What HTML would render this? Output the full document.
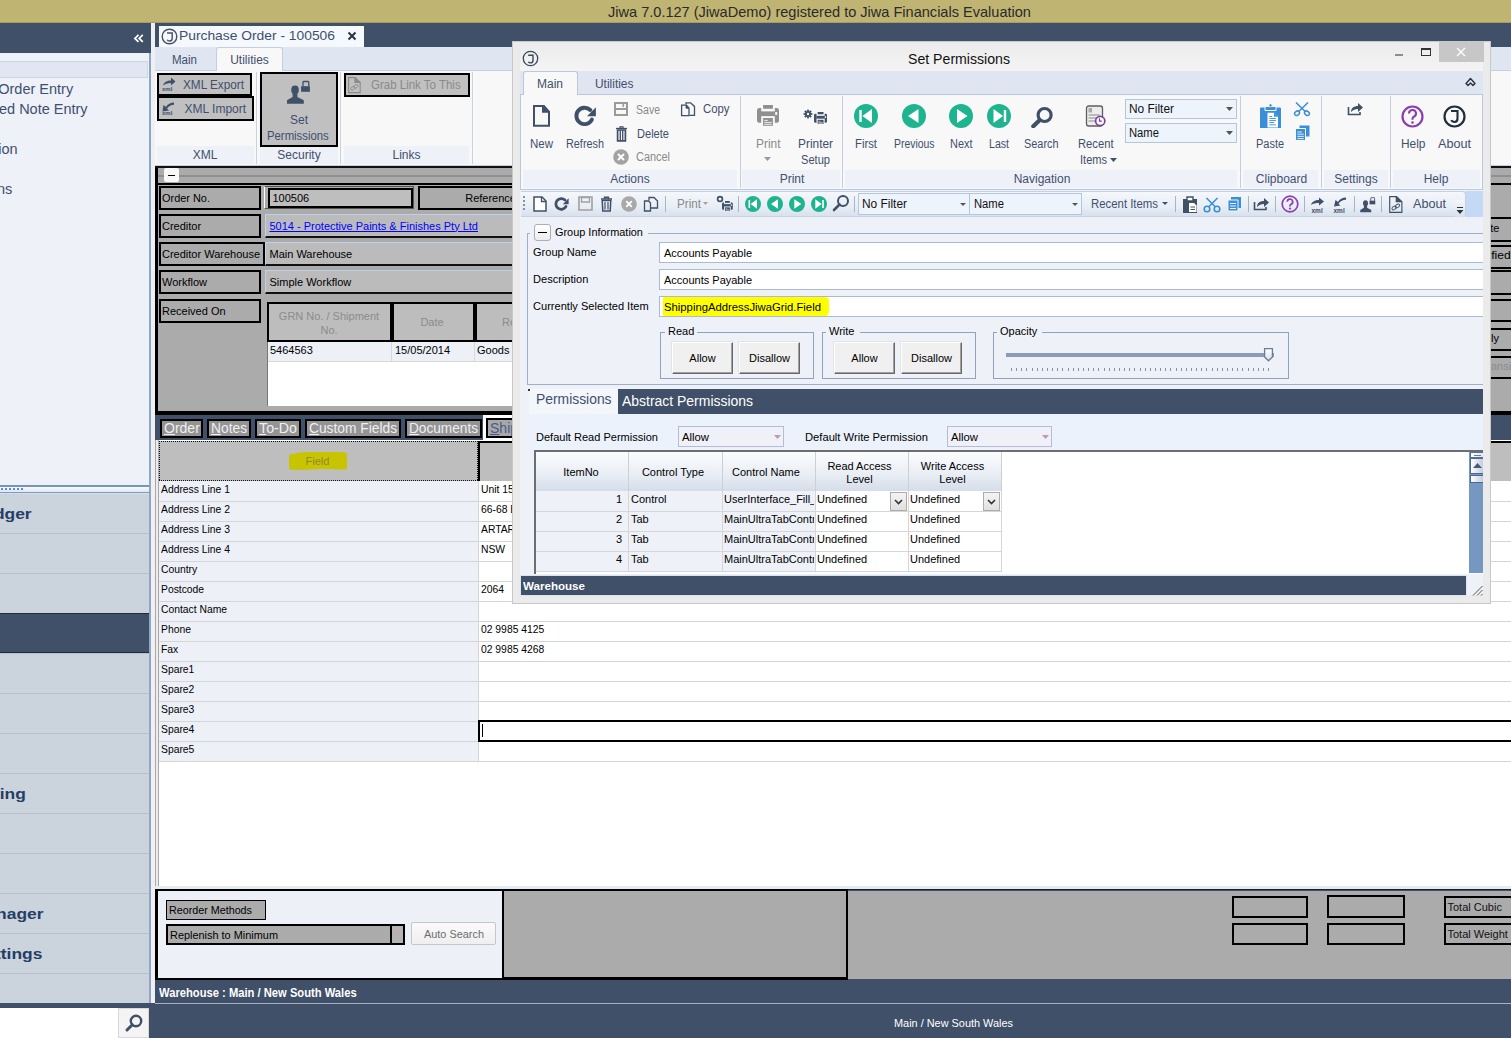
<!DOCTYPE html><html><head><meta charset="utf-8"><style>
html,body{margin:0;padding:0;width:1511px;height:1038px;overflow:hidden;background:#3F5068}
.a{position:absolute}
.t{white-space:nowrap;line-height:1;font-family:"Liberation Sans",sans-serif}
svg text{font-family:"Liberation Sans",sans-serif}
</style></head><body>
<div class="a" style="left:0px;top:0px;width:1511px;height:23px;background:#C0B472"></div>
<div class="a" style="left:0px;top:22px;width:1511px;height:1px;background:#A99C62"></div>
<div class="a t" style="left:608.00px;top:4.30px;font-size:15px;color:#2a2a2a;transform:scaleX(0.9700);transform-origin:0 0;">Jiwa 7.0.127 (JiwaDemo) registered to Jiwa Financials Evaluation</div>
<div class="a" style="left:0px;top:23px;width:1511px;height:1015px;background:#3F5068"></div>
<div class="a" style="left:0px;top:53px;width:150px;height:432px;background:#EEF1F8"></div>
<div class="a" style="left:0px;top:61px;width:148px;height:17px;background:#E1E7F2;border-top:1px solid #CDD5DF;border-bottom:1px solid #CDD5DF;border-right:1px solid #CDD5DF;box-sizing:border-box"></div>
<div class="a t" style="left:-67.08px;top:81.65px;font-size:14px;color:#3F4F6E;transform:scaleX(1.0350);transform-origin:0 0;">Purchase Order Entry</div>
<div class="a t" style="left:-92.06px;top:101.65px;font-size:14px;color:#3F4F6E;transform:scaleX(1.0350);transform-origin:0 0;">Goods Received Note Entry</div>
<div class="a t" style="left:-169.59px;top:141.65px;font-size:14px;color:#3F4F6E;transform:scaleX(1.0350);transform-origin:0 0;">Stock Transfer Reconciliation</div>
<div class="a t" style="left:-144.19px;top:181.65px;font-size:14px;color:#3F4F6E;transform:scaleX(1.0350);transform-origin:0 0;">Purchase Order Options</div>
<div class="a" style="left:0px;top:484.7px;width:150px;height:2.3000000000000114px;background:#7794BA"></div>
<div class="a" style="left:0px;top:487px;width:150px;height:5px;background:linear-gradient(#FAFCFE,#DCE6F3)"></div>
<div class="a" style="left:0px;top:492px;width:150px;height:1px;background:#7F9AC0"></div>
<div class="a" style="left:0px;top:493px;width:150px;height:1px;background:#D9DEE5"></div>
<div class="a" style="left:0px;top:494px;width:150px;height:509px;background:#CBD3DD"></div>
<div class="a" style="left:0px;top:533px;width:150px;height:1px;background:#B8C1CD"></div>
<div class="a" style="left:0px;top:573px;width:150px;height:1px;background:#B8C1CD"></div>
<div class="a" style="left:0px;top:613px;width:150px;height:1px;background:#B8C1CD"></div>
<div class="a" style="left:0px;top:653px;width:150px;height:1px;background:#B8C1CD"></div>
<div class="a" style="left:0px;top:693px;width:150px;height:1px;background:#B8C1CD"></div>
<div class="a" style="left:0px;top:733px;width:150px;height:1px;background:#B8C1CD"></div>
<div class="a" style="left:0px;top:773px;width:150px;height:1px;background:#B8C1CD"></div>
<div class="a" style="left:0px;top:813px;width:150px;height:1px;background:#B8C1CD"></div>
<div class="a" style="left:0px;top:853px;width:150px;height:1px;background:#B8C1CD"></div>
<div class="a" style="left:0px;top:893px;width:150px;height:1px;background:#B8C1CD"></div>
<div class="a" style="left:0px;top:933px;width:150px;height:1px;background:#B8C1CD"></div>
<div class="a" style="left:0px;top:973px;width:150px;height:1px;background:#B8C1CD"></div>
<div class="a" style="left:0px;top:613px;width:150px;height:40px;background:#3F5068;border-top:1px solid #1f2a3a;border-bottom:1px solid #1f2a3a;box-sizing:border-box"></div>
<div class="a t" style="left:-96.15px;top:505.80px;font-size:15px;color:#243E66;font-weight:bold;transform:scaleX(1.1600);transform-origin:0 0;">General Ledger</div>
<div class="a t" style="left:-69.24px;top:785.60px;font-size:15px;color:#243E66;font-weight:bold;transform:scaleX(1.1600);transform-origin:0 0;">Purchasing</div>
<div class="a t" style="left:-89.46px;top:905.80px;font-size:15px;color:#243E66;font-weight:bold;transform:scaleX(1.1600);transform-origin:0 0;">Report Manager</div>
<div class="a t" style="left:-93.39px;top:945.80px;font-size:15px;color:#243E66;font-weight:bold;transform:scaleX(1.1600);transform-origin:0 0;">System Settings</div>
<div class="a" style="left:149px;top:53px;width:2px;height:950px;background:#8FA5C2"></div>
<div class="a" style="left:0px;top:1008px;width:118px;height:30px;background:#fff"></div>
<div class="a" style="left:118px;top:1008px;width:31px;height:30px;background:#F4F4F4;border:1px solid #D8D8D8;box-sizing:border-box"></div>
<svg class="a" style="left:123px;top:1012px" width="22" height="22" viewBox="0 0 22 22"><circle cx="13" cy="9" r="5.2" fill="none" stroke="#3F5068" stroke-width="2.4"/><path d="M9.3 12.7L4 18" stroke="#3F5068" stroke-width="3" stroke-linecap="round"/></svg>
<div class="a" style="left:1px;top:488px;width:2px;height:2px;background:#4A86C8;border-radius:1px 0 0 0"></div><div class="a" style="left:5px;top:488px;width:2px;height:2px;background:#4A86C8;border-radius:1px 0 0 0"></div><div class="a" style="left:9px;top:488px;width:2px;height:2px;background:#4A86C8;border-radius:1px 0 0 0"></div><div class="a" style="left:13px;top:488px;width:2px;height:2px;background:#4A86C8;border-radius:1px 0 0 0"></div><div class="a" style="left:17px;top:488px;width:2px;height:2px;background:#4A86C8;border-radius:1px 0 0 0"></div><div class="a" style="left:21px;top:488px;width:2px;height:2px;background:#4A86C8;border-radius:1px 0 0 0"></div>
<svg class="a" style="left:130px;top:30px" width="16" height="16" viewBox="0 0 16 16"><path d="M8.5 4.9L4.9 8.4L8.5 11.9M12.8 4.9L9.2 8.4L12.8 11.9" fill="none" stroke="#fff" stroke-width="1.7"/></svg>
<div class="a" style="left:151px;top:23px;width:4px;height:980px;background:#EEF0F3"></div>
<div class="a" style="left:159px;top:26px;width:205px;height:21px;background:#F5F8FC"></div>
<svg class="a" style="left:161px;top:28px" width="17" height="17" viewBox="0 0 17 17"><circle cx="8.5" cy="8.5" r="7.3" fill="none" stroke="#3F5068" stroke-width="1.4"/><path d="M6 5h5.2v5.2c0 2-1 2.8-2.6 2.8c-1.2 0-2-.5-2.4-1.3" fill="none" stroke="#3F5068" stroke-width="1.4"/></svg>
<div class="a t" style="left:179.00px;top:29.00px;font-size:13px;color:#3F4F6E;transform:scaleX(1.0631);transform-origin:0 0;">Purchase Order - 100506</div>
<svg class="a" style="left:347px;top:31px" width="10" height="10" viewBox="0 0 10 10"><path d="M1.5 1.5L8.5 8.5M8.5 1.5L1.5 8.5" stroke="#2B3340" stroke-width="2"/></svg>
<div class="a" style="left:155px;top:47px;width:1356px;height:23px;background:#DFE5F1"></div>
<div class="a t" style="left:172.00px;top:53.84px;font-size:12px;color:#3F4F6E;transform:scaleX(0.9610);transform-origin:0 0;">Main</div>
<div class="a" style="left:155px;top:70px;width:1356px;height:96px;background:#F8F8F8;border-top:1px solid #C3CFE0;border-bottom:1px solid #C3CFE0;box-sizing:border-box"></div>
<div class="a" style="left:216px;top:47px;width:67px;height:24px;background:#F8F8F8;border:1px solid #C3CFE0;border-bottom:none;border-radius:3px 3px 0 0;box-sizing:border-box"></div>
<div class="a t" style="left:230.16px;top:53.84px;font-size:12px;color:#3F4F6E;">Utilities</div>
<div class="a" style="left:157px;top:146px;width:97px;height:18px;background:#EEF1F8"></div>
<div class="a" style="left:260px;top:146px;width:78px;height:18px;background:#EEF1F8"></div>
<div class="a" style="left:344px;top:146px;width:125px;height:18px;background:#EEF1F8"></div>
<div class="a" style="left:256px;top:72px;width:1px;height:92px;background:#C9D4E3"></div>
<div class="a" style="left:340px;top:72px;width:1px;height:92px;background:#C9D4E3"></div>
<div class="a" style="left:472px;top:72px;width:1px;height:92px;background:#C9D4E3"></div>
<div class="a t" style="left:192.66px;top:148.84px;font-size:12px;color:#3F4F6E;">XML</div>
<div class="a t" style="left:277.33px;top:148.84px;font-size:12px;color:#3F4F6E;">Security</div>
<div class="a t" style="left:392.49px;top:148.84px;font-size:12px;color:#3F4F6E;">Links</div>
<div class="a" style="left:157px;top:73px;width:95px;height:23px;background:#C0C0C0;border:2px solid #000;box-sizing:border-box"></div>
<div class="a" style="left:157px;top:96px;width:97px;height:25px;background:#C0C0C0;border:2px solid #000;box-sizing:border-box"></div>
<div class="a t" style="left:183.00px;top:78.84px;font-size:12px;color:#3F4F6E;transform:scaleX(0.9802);transform-origin:0 0;">XML Export</div>
<div class="a t" style="left:184.50px;top:102.84px;font-size:12px;color:#3F4F6E;">XML Import</div>
<svg class="a" style="left:161px;top:77px" width="16" height="15" viewBox="0 0 16 15"><path d="M2 8.5c1-3.5 4-5 8-5V0.5l4.5 4-4.5 4V6C6.5 6 4 7 2 8.5z" fill="#3F5068"/><text x="1" y="14" font-size="6" font-family="Liberation Sans" font-weight="bold" fill="#3F5068">xml</text></svg>
<svg class="a" style="left:161px;top:101px" width="16" height="15" viewBox="0 0 16 15"><path d="M13 1.5c-3.5 0-6.5 1.5-8 4.5L2.5 4 1.5 10.5 8 9.5 6 7.8c1.5-2.5 4-3.8 7-4z" fill="#3F5068"/><text x="1" y="14" font-size="6" font-family="Liberation Sans" font-weight="bold" fill="#3F5068">xml</text></svg>
<div class="a" style="left:260px;top:72px;width:78px;height:75px;background:#C0C0C0;border:2px solid #000;box-sizing:border-box"></div>
<svg class="a" style="left:282px;top:76px" width="32" height="32" viewBox="0 0 32 32"><ellipse cx="13" cy="14" rx="3.8" ry="4.4" fill="#3F5068"/><rect x="10.6" y="16" width="4.8" height="5.5" fill="#3F5068"/><path d="M5 24.3L10.6 21H15.4L21.8 24.3V27.8H5z" fill="#3F5068"/><path d="M21 10.6V6.3a0.8 0.8 0 0 1 .8-.8h4.2a0.8 0.8 0 0 1 .8.8v4.3" fill="none" stroke="#3F5068" stroke-width="1.3"/><rect x="19.1" y="10.2" width="8.8" height="5.6" fill="#3F5068"/></svg>
<div class="a t" style="left:290.00px;top:113.84px;font-size:12px;color:#3F4F6E;">Set</div>
<div class="a t" style="left:266.50px;top:129.84px;font-size:12px;color:#3F4F6E;transform:scaleX(0.9440);transform-origin:0 0;">Permissions</div>
<div class="a" style="left:344px;top:73px;width:126px;height:24px;background:#C0C0C0;border:2px solid #000;box-sizing:border-box"></div>
<svg class="a" style="left:347px;top:76px" width="15.0" height="18.0" viewBox="0 0 15 18"><path d="M1.6 1.6H8L13.2 6.6V16.6H1.6Z" fill="none" stroke="#8C8C8C" stroke-width="1.1"/><path d="M7.3 1.2H8.4L13.6 6.2V7H7.3Z" fill="#8C8C8C"/><ellipse cx="5.8" cy="12.3" rx="2.3" ry="1.5" transform="rotate(-35 5.8 12.3)" fill="none" stroke="#8C8C8C" stroke-width="0.9"/><ellipse cx="9" cy="10.4" rx="2.3" ry="1.5" transform="rotate(-35 9 10.4)" fill="none" stroke="#8C8C8C" stroke-width="0.9"/></svg>
<div class="a t" style="left:371.00px;top:78.84px;font-size:12px;color:#8A8A8A;transform:scaleX(0.9575);transform-origin:0 0;">Grab Link To This</div>
<div class="a" style="left:155px;top:166px;width:1356px;height:247px;background:#ABABAB"></div>
<div class="a" style="left:155px;top:166px;width:3px;height:247px;background:#000"></div>
<div class="a" style="left:155px;top:165.5px;width:1356px;height:2.5px;background:#111"></div>
<div class="a" style="left:158px;top:175px;width:1353px;height:2px;background:#8F8F8F"></div>
<div class="a" style="left:164px;top:168px;width:15px;height:14px;background:#F8F8F8;border-radius:2px"></div>
<div class="a" style="left:168px;top:175px;width:7px;height:1px;background:#000"></div>
<div class="a" style="left:158px;top:183px;width:1353px;height:2px;background:#000"></div>
<div class="a" style="left:159px;top:186px;width:102px;height:24px;background:#ABABAB;border:2px solid #000;box-sizing:border-box"></div>
<div class="a t" style="left:162.00px;top:192.69px;font-size:11px;color:#000;transform:scaleX(0.9935);transform-origin:0 0;">Order No.</div>
<div class="a" style="left:159px;top:214px;width:102px;height:24px;background:#ABABAB;border:2px solid #000;box-sizing:border-box"></div>
<div class="a t" style="left:162.00px;top:220.69px;font-size:11px;color:#000;">Creditor</div>
<div class="a" style="left:159px;top:242px;width:106px;height:24px;background:#ABABAB;border:2px solid #000;box-sizing:border-box"></div>
<div class="a t" style="left:162.00px;top:248.69px;font-size:11px;color:#000;">Creditor Warehouse</div>
<div class="a" style="left:159px;top:270px;width:102px;height:24px;background:#ABABAB;border:2px solid #000;box-sizing:border-box"></div>
<div class="a t" style="left:162.00px;top:276.69px;font-size:11px;color:#000;">Workflow</div>
<div class="a" style="left:159px;top:299px;width:102px;height:24px;background:#ABABAB;border:2px solid #000;box-sizing:border-box"></div>
<div class="a t" style="left:162.00px;top:305.69px;font-size:11px;color:#000;">Received On</div>
<div class="a" style="left:264px;top:186px;width:150px;height:23px;background:#ABABAB;border:1px solid #555;border-left-color:#fff;box-sizing:border-box"></div>
<div class="a" style="left:268px;top:188px;width:145px;height:20px;background:#BEBEBE;border:2px solid #000;box-sizing:border-box"></div>
<div class="a t" style="left:272.50px;top:192.69px;font-size:11px;color:#000;">100506</div>
<div class="a" style="left:418px;top:186px;width:1032px;height:24px;background:#ABABAB;border:2px solid #000;box-sizing:border-box"></div>
<div class="a t" style="left:465.22px;top:192.69px;font-size:11px;color:#000;">Reference</div>
<div class="a" style="left:265px;top:214px;width:1185px;height:24px;background:#BBBBBB;border:1px solid #BFD0EA;border-bottom:2px solid #111;box-sizing:border-box"></div>
<div class="a" style="left:265px;top:242px;width:1185px;height:24px;background:#BBBBBB;border:1px solid #BFD0EA;border-bottom:2px solid #111;box-sizing:border-box"></div>
<div class="a" style="left:265px;top:270px;width:1185px;height:24px;background:#BBBBBB;border:1px solid #BFD0EA;border-bottom:2px solid #111;box-sizing:border-box"></div>
<div class="a t" style="left:269.50px;top:220.69px;font-size:11px;color:#0000FF;text-decoration:underline">5014 - Protective Paints &amp; Finishes Pty Ltd</div>
<div class="a t" style="left:269.50px;top:248.69px;font-size:11px;color:#000;">Main Warehouse</div>
<div class="a t" style="left:269.50px;top:276.69px;font-size:11px;color:#000;">Simple Workflow</div>
<div class="a" style="left:267px;top:302px;width:1183px;height:104px;background:#fff;border-left:1px solid #777;box-sizing:border-box"></div>
<div class="a" style="left:267px;top:302px;width:1183px;height:40px;background:#BDBDBD"></div>
<div class="a" style="left:267px;top:302px;width:125px;height:40px;border:2px solid #000;box-sizing:border-box"></div>
<div class="a" style="left:392px;top:302px;width:83px;height:40px;border:2px solid #000;box-sizing:border-box"></div>
<div class="a" style="left:475px;top:302px;width:975px;height:40px;border:2px solid #000;box-sizing:border-box"></div>
<div class="a t" style="left:278.84px;top:310.69px;font-size:11px;color:#8C8C8C;">GRN No. / Shipment</div>
<div class="a t" style="left:320.44px;top:324.69px;font-size:11px;color:#8C8C8C;">No.</div>
<div class="a t" style="left:420.38px;top:316.69px;font-size:11px;color:#8C8C8C;">Date</div>
<div class="a t" style="left:502.00px;top:316.69px;font-size:11px;color:#8C8C8C;">Reference</div>
<div class="a" style="left:268px;top:342px;width:1182px;height:20px;background:#EEF0F8;border-bottom:1px solid #D8D8D8;box-sizing:border-box"></div>
<div class="a" style="left:391px;top:342px;width:1px;height:20px;background:#D8D8D8"></div>
<div class="a" style="left:474px;top:342px;width:1px;height:20px;background:#D8D8D8"></div>
<div class="a t" style="left:270.00px;top:344.69px;font-size:11px;color:#000;">5464563</div>
<div class="a t" style="left:395.00px;top:344.69px;font-size:11px;color:#000;">15/05/2014</div>
<div class="a t" style="left:477.00px;top:344.69px;font-size:11px;color:#000;">Goods Received</div>
<div class="a" style="left:155px;top:411px;width:1356px;height:4px;background:#000"></div>
<div class="a" style="left:155px;top:415px;width:1356px;height:25px;background:#3F5068"></div>
<div class="a" style="left:160px;top:419px;width:43px;height:19px;background:#949494;border:2px solid #000;box-sizing:border-box"></div>
<div class="a t" style="left:164.00px;top:421.15px;font-size:14px;color:#F0F0F0;"><u>O</u>rder</div>
<div class="a" style="left:207px;top:419px;width:44px;height:19px;background:#949494;border:2px solid #000;box-sizing:border-box"></div>
<div class="a t" style="left:211.00px;top:421.15px;font-size:14px;color:#F0F0F0;transform:scaleX(0.9846);transform-origin:0 0;"><u>N</u>otes</div>
<div class="a" style="left:255px;top:419px;width:46px;height:19px;background:#949494;border:2px solid #000;box-sizing:border-box"></div>
<div class="a t" style="left:259.00px;top:421.15px;font-size:14px;color:#F0F0F0;transform:scaleX(1.0180);transform-origin:0 0;"><u>T</u>o-Do</div>
<div class="a" style="left:305px;top:419px;width:96px;height:19px;background:#949494;border:2px solid #000;box-sizing:border-box"></div>
<div class="a t" style="left:309.00px;top:421.15px;font-size:14px;color:#F0F0F0;transform:scaleX(0.9839);transform-origin:0 0;"><u>C</u>ustom Fields</div>
<div class="a" style="left:405px;top:419px;width:77px;height:19px;background:#949494;border:2px solid #000;box-sizing:border-box"></div>
<div class="a t" style="left:409.00px;top:421.15px;font-size:14px;color:#F0F0F0;transform:scaleX(0.9748);transform-origin:0 0;"><u>D</u>ocuments</div>
<div class="a" style="left:483px;top:415px;width:82px;height:25px;background:#fff"></div>
<div class="a" style="left:486px;top:418px;width:77px;height:20px;background:#A8A8A8;border:2px solid #000;box-sizing:border-box"></div>
<div class="a t" style="left:490.00px;top:421.15px;font-size:14px;color:#4A5A8A;"><u>S</u>hipping</div>
<div class="a" style="left:155px;top:440px;width:1356px;height:449px;background:#fff"></div>
<div class="a" style="left:155px;top:440px;width:4px;height:449px;background:#ECECEC;border-left:1px solid #A9A9A9;border-right:1px solid #A9A9A9;box-sizing:border-box"></div>
<div class="a" style="left:159px;top:441px;width:1352px;height:40px;background:#BEBEBE"></div>
<div class="a" style="left:159px;top:441px;width:319px;height:1px;background:repeating-linear-gradient(90deg,#111 0 1px,transparent 1px 2px)"></div>
<div class="a" style="left:159px;top:480px;width:319px;height:1px;background:repeating-linear-gradient(90deg,#111 0 1px,transparent 1px 2px)"></div>
<div class="a" style="left:159px;top:441px;width:1px;height:40px;background:repeating-linear-gradient(180deg,#111 0 1px,transparent 1px 2px)"></div>
<div class="a" style="left:477px;top:441px;width:1px;height:40px;background:repeating-linear-gradient(180deg,#111 0 1px,transparent 1px 2px)"></div>
<div class="a" style="left:478px;top:441px;width:1033px;height:40px;border-left:2px solid #000;border-top:2px solid #000;box-sizing:border-box"></div>
<svg class="a" style="left:287px;top:450px" width="62" height="22" viewBox="0 0 62 22"><path d="M2 5.5Q2 4.5 4 4.3L14 2.2Q16 1.8 20 2H54Q59.5 2.2 60 3.8V18.5Q59.5 19.8 56 19.5L38 19Q34 18.5 30 19.2L16 19.8Q5 20 3 19.5Q2 19 2 17z" fill="#C9C400"/></svg>
<div class="a t" style="left:305.58px;top:456.19px;font-size:11px;color:#8C8A30;">Field</div>
<div class="a" style="left:159px;top:481px;width:319px;height:280px;background:#EEF0F8"></div>
<div class="a" style="left:159px;top:501px;width:1352px;height:1px;background:#D5D5D5"></div>
<div class="a t" style="left:161.00px;top:483.69px;font-size:11px;color:#000;transform:scaleX(0.9400);transform-origin:0 0;">Address Line 1</div>
<div class="a t" style="left:481.00px;top:483.69px;font-size:11px;color:#000;transform:scaleX(0.9400);transform-origin:0 0;">Unit 15</div>
<div class="a" style="left:159px;top:521px;width:1352px;height:1px;background:#D5D5D5"></div>
<div class="a t" style="left:161.00px;top:503.69px;font-size:11px;color:#000;transform:scaleX(0.9400);transform-origin:0 0;">Address Line 2</div>
<div class="a t" style="left:481.00px;top:503.69px;font-size:11px;color:#000;transform:scaleX(0.9400);transform-origin:0 0;">66-68 Bower</div>
<div class="a" style="left:159px;top:541px;width:1352px;height:1px;background:#D5D5D5"></div>
<div class="a t" style="left:161.00px;top:523.69px;font-size:11px;color:#000;transform:scaleX(0.9400);transform-origin:0 0;">Address Line 3</div>
<div class="a t" style="left:481.00px;top:523.69px;font-size:11px;color:#000;transform:scaleX(0.9400);transform-origin:0 0;">ARTARMON</div>
<div class="a" style="left:159px;top:561px;width:1352px;height:1px;background:#D5D5D5"></div>
<div class="a t" style="left:161.00px;top:543.69px;font-size:11px;color:#000;transform:scaleX(0.9400);transform-origin:0 0;">Address Line 4</div>
<div class="a t" style="left:481.00px;top:543.69px;font-size:11px;color:#000;transform:scaleX(0.9400);transform-origin:0 0;">NSW</div>
<div class="a" style="left:159px;top:581px;width:1352px;height:1px;background:#D5D5D5"></div>
<div class="a t" style="left:161.00px;top:563.69px;font-size:11px;color:#000;transform:scaleX(0.9400);transform-origin:0 0;">Country</div>
<div class="a" style="left:159px;top:601px;width:1352px;height:1px;background:#D5D5D5"></div>
<div class="a t" style="left:161.00px;top:583.69px;font-size:11px;color:#000;transform:scaleX(0.9400);transform-origin:0 0;">Postcode</div>
<div class="a t" style="left:481.00px;top:583.69px;font-size:11px;color:#000;transform:scaleX(0.9400);transform-origin:0 0;">2064</div>
<div class="a" style="left:159px;top:621px;width:1352px;height:1px;background:#D5D5D5"></div>
<div class="a t" style="left:161.00px;top:603.69px;font-size:11px;color:#000;transform:scaleX(0.9400);transform-origin:0 0;">Contact Name</div>
<div class="a" style="left:159px;top:641px;width:1352px;height:1px;background:#D5D5D5"></div>
<div class="a t" style="left:161.00px;top:623.69px;font-size:11px;color:#000;transform:scaleX(0.9400);transform-origin:0 0;">Phone</div>
<div class="a t" style="left:481.00px;top:623.69px;font-size:11px;color:#000;transform:scaleX(0.9400);transform-origin:0 0;">02 9985 4125</div>
<div class="a" style="left:159px;top:661px;width:1352px;height:1px;background:#D5D5D5"></div>
<div class="a t" style="left:161.00px;top:643.69px;font-size:11px;color:#000;transform:scaleX(0.9400);transform-origin:0 0;">Fax</div>
<div class="a t" style="left:481.00px;top:643.69px;font-size:11px;color:#000;transform:scaleX(0.9400);transform-origin:0 0;">02 9985 4268</div>
<div class="a" style="left:159px;top:681px;width:1352px;height:1px;background:#D5D5D5"></div>
<div class="a t" style="left:161.00px;top:663.69px;font-size:11px;color:#000;transform:scaleX(0.9400);transform-origin:0 0;">Spare1</div>
<div class="a" style="left:159px;top:701px;width:1352px;height:1px;background:#D5D5D5"></div>
<div class="a t" style="left:161.00px;top:683.69px;font-size:11px;color:#000;transform:scaleX(0.9400);transform-origin:0 0;">Spare2</div>
<div class="a" style="left:159px;top:721px;width:1352px;height:1px;background:#D5D5D5"></div>
<div class="a t" style="left:161.00px;top:703.69px;font-size:11px;color:#000;transform:scaleX(0.9400);transform-origin:0 0;">Spare3</div>
<div class="a" style="left:159px;top:741px;width:1352px;height:1px;background:#D5D5D5"></div>
<div class="a t" style="left:161.00px;top:723.69px;font-size:11px;color:#000;transform:scaleX(0.9400);transform-origin:0 0;">Spare4</div>
<div class="a" style="left:159px;top:761px;width:1352px;height:1px;background:#D5D5D5"></div>
<div class="a t" style="left:161.00px;top:743.69px;font-size:11px;color:#000;transform:scaleX(0.9400);transform-origin:0 0;">Spare5</div>
<div class="a" style="left:478px;top:481px;width:1px;height:280px;background:#D5D5D5"></div>
<div class="a" style="left:478px;top:720px;width:1042px;height:22px;border:2px solid #000;box-sizing:border-box"></div>
<div class="a" style="left:482px;top:724px;width:1px;height:13px;background:#000"></div>
<div class="a" style="left:155px;top:886px;width:1356px;height:3px;background:#E4ECF4"></div>
<div class="a" style="left:155px;top:889px;width:693px;height:91px;background:#000"></div>
<div class="a" style="left:848px;top:889px;width:663px;height:1px;background:#1A1F28"></div>
<div class="a" style="left:848px;top:978px;width:663px;height:1px;background:#1A1F28"></div>
<div class="a" style="left:158px;top:891px;width:344px;height:87px;background:#EEF0F8"></div>
<div class="a" style="left:502px;top:891px;width:1009px;height:88px;background:#ABABAB"></div>
<div class="a" style="left:502px;top:889px;width:346px;height:90px;border:2px solid #000;box-sizing:border-box"></div>
<div class="a" style="left:166px;top:900px;width:100px;height:20px;background:#ABABAB;border:1px solid #000;box-sizing:border-box"></div>
<div class="a t" style="left:168.50px;top:904.69px;font-size:11px;color:#000;transform:scaleX(0.9761);transform-origin:0 0;">Reorder Methods</div>
<div class="a" style="left:166px;top:924px;width:239px;height:21px;background:#ABABAB;border:2px solid #000;box-sizing:border-box"></div>
<div class="a" style="left:390px;top:926px;width:2px;height:17px;background:#000"></div>
<div class="a" style="left:392px;top:926px;width:11px;height:17px;background:#B4B4B4"></div>
<svg class="a" style="left:394px;top:932px" width="7" height="4" viewBox="0 0 7 4"><path d="M0 0h7L3.5 4z" fill="#C9A8B8"/></svg>
<div class="a t" style="left:170.00px;top:929.69px;font-size:11px;color:#000;transform:scaleX(0.9922);transform-origin:0 0;">Replenish to Minimum</div>
<div class="a" style="left:411px;top:922px;width:85px;height:23px;background:linear-gradient(#FAFAFA,#EFEFEF);border:1px solid #C6C6C6;border-radius:2px;box-sizing:border-box"></div>
<div class="a t" style="left:423.50px;top:928.69px;font-size:11px;color:#6D6D6D;transform:scaleX(0.9902);transform-origin:0 0;">Auto Search</div>
<div class="a" style="left:1232px;top:896px;width:76px;height:22px;border:2px solid #000;box-sizing:border-box"></div>
<div class="a" style="left:1232px;top:923px;width:76px;height:22px;border:2px solid #000;box-sizing:border-box"></div>
<div class="a" style="left:1327px;top:895px;width:78px;height:23px;border:2px solid #000;box-sizing:border-box"></div>
<div class="a" style="left:1327px;top:923px;width:78px;height:22px;border:2px solid #000;box-sizing:border-box"></div>
<div class="a" style="left:1444px;top:896px;width:76px;height:22px;border:2px solid #000;box-sizing:border-box"></div>
<div class="a t" style="left:1447.50px;top:901.69px;font-size:11px;color:#111;">Total Cubic</div>
<div class="a" style="left:1444px;top:923px;width:76px;height:22px;border:2px solid #000;box-sizing:border-box"></div>
<div class="a t" style="left:1447.50px;top:929.19px;font-size:11px;color:#111;">Total Weight</div>
<div class="a t" style="left:158.50px;top:986.84px;font-size:12px;color:#fff;font-weight:bold;transform:scaleX(0.9332);transform-origin:0 0;">Warehouse : Main / New South Wales</div>
<div class="a" style="left:155px;top:1003px;width:1356px;height:1px;background:#A9B2C0"></div>
<div class="a t" style="left:894.00px;top:1017.69px;font-size:11px;color:#fff;transform:scaleX(0.9909);transform-origin:0 0;">Main / New South Wales</div>
<div class="a" style="left:1450px;top:217px;width:70px;height:24.5px;background:#ABABAB;border:2px solid #000;box-sizing:border-box"></div>
<div class="a t" style="left:1476.25px;top:222.99px;font-size:11px;color:#000;">Date</div>
<div class="a" style="left:1450px;top:244.5px;width:70px;height:24.0px;background:#ABABAB;border:2px solid #000;box-sizing:border-box"></div>
<div class="a t" style="left:1464.77px;top:249.99px;font-size:11px;color:#000;transform:scaleX(1.1000);transform-origin:0 0;">Modified</div>
<div class="a" style="left:1450px;top:270px;width:70px;height:25px;background:#ABABAB;border:2px solid #000;box-sizing:border-box"></div>
<div class="a" style="left:1450px;top:298.5px;width:70px;height:23.5px;background:#ABABAB;border:2px solid #000;box-sizing:border-box"></div>
<div class="a" style="left:1450px;top:327.5px;width:70px;height:23.0px;background:#ABABAB;border:2px solid #000;box-sizing:border-box"></div>
<div class="a t" style="left:1466.62px;top:333.19px;font-size:11px;color:#000;">Family</div>
<div class="a" style="left:1450px;top:355.5px;width:70px;height:23.0px;background:#ABABAB;border:2px solid #000;box-sizing:border-box"></div>
<div class="a t" style="left:1481.03px;top:360.69px;font-size:11px;color:#8C8C8C;">Transit</div>
<div class="a" style="left:512px;top:41px;width:979px;height:563px;background:#EBEBEB;border:1px solid #C8C8C8;box-sizing:border-box"></div>
<div class="a" style="left:520px;top:42px;width:963px;height:29px;background:linear-gradient(#EBEBEB,#F4F4F4)"></div>
<svg class="a" style="left:522px;top:50px" width="17" height="17" viewBox="0 0 17 17"><circle cx="8.5" cy="8.5" r="7.2" fill="none" stroke="#3A4A5E" stroke-width="1.3"/><path d="M6.2 5.2h4.8v5c0 2-1 2.7-2.4 2.7c-1.1 0-1.9-.5-2.2-1.2" fill="none" stroke="#3A4A5E" stroke-width="1.4"/></svg>
<div class="a t" style="left:907.50px;top:51.30px;font-size:15px;color:#111;transform:scaleX(0.9412);transform-origin:0 0;">Set Permissions</div>
<div class="a" style="left:1439px;top:42px;width:45px;height:20px;background:#C7C7C7"></div>
<svg class="a" style="left:1456px;top:47px" width="10" height="10" viewBox="0 0 10 10"><path d="M1 1L9 9M9 1L1 9" stroke="#fff" stroke-width="1.3"/></svg>
<div class="a" style="left:1421px;top:48px;width:10px;height:8px;border:1px solid #333;border-top-width:2px;box-sizing:border-box"></div>
<div class="a" style="left:1395px;top:54px;width:8px;height:2px;background:#8E8E8E"></div>
<div class="a" style="left:520px;top:71px;width:963px;height:23px;background:#DFE5F1"></div>
<svg class="a" style="left:1465px;top:77px" width="11" height="10" viewBox="0 0 11 10"><path d="M1 6.5L5.5 1.5L10 6.5L8 8.5L5.5 6L3 8.5z" fill="none" stroke="#2B3340" stroke-width="1.4" stroke-linejoin="round"/></svg>
<div class="a" style="left:520px;top:94px;width:963px;height:96px;background:#F8F8F8;border:1px solid #B9C8DC;box-sizing:border-box"></div>
<div class="a" style="left:523px;top:71px;width:55px;height:24px;background:#F8F8F8;border:1px solid #B9C8DC;border-bottom:none;border-radius:3px 3px 0 0;box-sizing:border-box"></div>
<div class="a t" style="left:537.00px;top:77.84px;font-size:12px;color:#3F4F6E;">Main</div>
<div class="a t" style="left:594.75px;top:77.84px;font-size:12px;color:#3F4F6E;transform:scaleX(0.9952);transform-origin:0 0;">Utilities</div>
<div class="a" style="left:523px;top:170px;width:214px;height:18px;background:#EEF1F8"></div>
<div class="a" style="left:742px;top:170px;width:98px;height:18px;background:#EEF1F8"></div>
<div class="a" style="left:845px;top:170px;width:392px;height:18px;background:#EEF1F8"></div>
<div class="a" style="left:1243px;top:170px;width:75px;height:18px;background:#EEF1F8"></div>
<div class="a" style="left:1324px;top:170px;width:64px;height:18px;background:#EEF1F8"></div>
<div class="a" style="left:1393px;top:170px;width:87px;height:18px;background:#EEF1F8"></div>
<div class="a" style="left:740px;top:96px;width:1px;height:92px;background:#C3CFE0"></div>
<div class="a" style="left:842px;top:96px;width:1px;height:92px;background:#C3CFE0"></div>
<div class="a" style="left:1240px;top:96px;width:1px;height:92px;background:#C3CFE0"></div>
<div class="a" style="left:1321px;top:96px;width:1px;height:92px;background:#C3CFE0"></div>
<div class="a" style="left:1390px;top:96px;width:1px;height:92px;background:#C3CFE0"></div>
<div class="a t" style="left:610.33px;top:173.34px;font-size:12px;color:#3F4F6E;">Actions</div>
<div class="a t" style="left:779.66px;top:173.34px;font-size:12px;color:#3F4F6E;">Print</div>
<div class="a t" style="left:1013.65px;top:173.34px;font-size:12px;color:#3F4F6E;">Navigation</div>
<div class="a t" style="left:1255.81px;top:173.34px;font-size:12px;color:#3F4F6E;">Clipboard</div>
<div class="a t" style="left:1334.33px;top:173.34px;font-size:12px;color:#3F4F6E;">Settings</div>
<div class="a t" style="left:1423.66px;top:173.34px;font-size:12px;color:#3F4F6E;">Help</div>
<div class="a t" style="left:529.50px;top:138.34px;font-size:12px;color:#3F4F6E;transform:scaleX(0.9577);transform-origin:0 0;">New</div>
<div class="a t" style="left:565.50px;top:138.34px;font-size:12px;color:#3F4F6E;transform:scaleX(0.9044);transform-origin:0 0;">Refresh</div>
<div class="a t" style="left:636.00px;top:103.64px;font-size:12px;color:#8A8A8A;transform:scaleX(0.8777);transform-origin:0 0;">Save</div>
<div class="a t" style="left:636.50px;top:127.54px;font-size:12px;color:#3F4F6E;transform:scaleX(0.9225);transform-origin:0 0;">Delete</div>
<div class="a t" style="left:636.00px;top:151.44px;font-size:12px;color:#8A8A8A;transform:scaleX(0.9101);transform-origin:0 0;">Cancel</div>
<div class="a t" style="left:703.30px;top:103.34px;font-size:12px;color:#3F4F6E;transform:scaleX(0.9459);transform-origin:0 0;">Copy</div>
<div class="a t" style="left:755.55px;top:138.44px;font-size:12px;color:#8A8A8A;transform:scaleX(0.9930);transform-origin:0 0;">Print</div>
<svg class="a" style="left:764px;top:157px" width="7" height="4" viewBox="0 0 7 4"><path d="M0 0h7L3.5 4z" fill="#9A9A9A"/></svg>
<div class="a t" style="left:797.50px;top:138.44px;font-size:12px;color:#3F4F6E;transform:scaleX(0.9903);transform-origin:0 0;">Printer</div>
<div class="a t" style="left:800.50px;top:154.34px;font-size:12px;color:#3F4F6E;transform:scaleX(0.9252);transform-origin:0 0;">Setup</div>
<div class="a t" style="left:855.00px;top:138.44px;font-size:12px;color:#3F4F6E;transform:scaleX(0.9431);transform-origin:0 0;">First</div>
<div class="a t" style="left:893.55px;top:138.44px;font-size:12px;color:#3F4F6E;transform:scaleX(0.8675);transform-origin:0 0;">Previous</div>
<div class="a t" style="left:949.55px;top:138.44px;font-size:12px;color:#3F4F6E;transform:scaleX(0.9120);transform-origin:0 0;">Next</div>
<div class="a t" style="left:989.00px;top:138.44px;font-size:12px;color:#3F4F6E;transform:scaleX(0.8822);transform-origin:0 0;">Last</div>
<div class="a t" style="left:1024.25px;top:138.44px;font-size:12px;color:#3F4F6E;transform:scaleX(0.9075);transform-origin:0 0;">Search</div>
<div class="a t" style="left:1077.75px;top:138.44px;font-size:12px;color:#3F4F6E;transform:scaleX(0.9338);transform-origin:0 0;">Recent</div>
<div class="a t" style="left:1079.50px;top:154.14px;font-size:12px;color:#3F4F6E;transform:scaleX(0.9206);transform-origin:0 0;">Items</div>
<svg class="a" style="left:1110px;top:158px" width="7" height="4" viewBox="0 0 7 4"><path d="M0 0h7L3.5 4z" fill="#3F4F6E"/></svg>
<div class="a t" style="left:1256.00px;top:138.44px;font-size:12px;color:#3F4F6E;transform:scaleX(0.9129);transform-origin:0 0;">Paste</div>
<div class="a t" style="left:1400.75px;top:138.44px;font-size:12px;color:#3F4F6E;transform:scaleX(0.9924);transform-origin:0 0;">Help</div>
<div class="a t" style="left:1437.50px;top:138.44px;font-size:12px;color:#3F4F6E;transform:scaleX(1.0528);transform-origin:0 0;">About</div>
<svg class="a" style="left:533px;top:105px" width="17" height="22" viewBox="0 0 17 22"><path d="M1 1H10.8L16 6.8V20.7H1Z" fill="none" stroke="#3F5068" stroke-width="2"/><path d="M9 0H11L17 6.8V7.8H9Z" fill="#3F5068"/></svg>
<svg class="a" style="left:572px;top:104px" width="26" height="24" viewBox="0 0 26 24"><path d="M19.9 15.6A8.2 8.2 0 1 1 18.3 6" fill="none" stroke="#3F5068" stroke-width="3.9" stroke-linecap="round"/><path d="M23.9 3.3V12.2H15Z" fill="#3F5068"/></svg>
<svg class="a" style="left:613px;top:101px" width="16" height="16" viewBox="0 0 16 16"><path d="M2 2h12v12H2z" fill="none" stroke="#9A9A9A" stroke-width="2"/><path d="M2 8h12" stroke="#9A9A9A" stroke-width="2"/><path d="M10.3 2.5v3.5" stroke="#9A9A9A" stroke-width="1.6"/></svg>
<svg class="a" style="left:615px;top:125px" width="13" height="17" viewBox="0 0 13 17"><path d="M1 3.5h11" stroke="#3F5068" stroke-width="1.3"/><path d="M5 3V1.8h3V3" fill="none" stroke="#3F5068" stroke-width="1.2"/><path d="M2.6 5h7.8v10.8H2.6z" fill="none" stroke="#3F5068" stroke-width="1.7"/><path d="M5.3 5v10M7.7 5v10" stroke="#3F5068" stroke-width="1.3"/></svg>
<svg class="a" style="left:613px;top:149px" width="16" height="16" viewBox="0 0 16 16"><circle cx="8" cy="8" r="7.8" fill="#A3A3A3"/><path d="M5 5L11 11M11 5L5 11" stroke="#fff" stroke-width="2"/></svg>
<svg class="a" style="left:680px;top:101px" width="17" height="16" viewBox="0 0 17 16"><path d="M6 3.6V1.8h4.6l3.9 3.6v8.9H9.6" fill="none" stroke="#3F5068" stroke-width="1.3"/><path d="M1.6 4.2h4.8l2.6 2.7v7.8H1.6z" fill="#F8F8F8" stroke="#3F5068" stroke-width="1.3"/><path d="M6 4v3.3h3" fill="#3F5068" stroke="#3F5068" stroke-width="0.8"/></svg>
<svg class="a" style="left:757px;top:105px" width="22.0" height="21.0" viewBox="0 0 22 21"><rect x="6.1" y="0" width="9.8" height="3.8" fill="#8F8F8F"/><path d="M0 5.5a2.5 2.5 0 0 1 2.5-2.5h1.7v14.8H2.5A2.5 2.5 0 0 1 0 15.3z" fill="#8F8F8F"/><path d="M22 5.5a2.5 2.5 0 0 0-2.5-2.5h-1.7v14.8h1.7a2.5 2.5 0 0 0 2.5-2.5z" fill="#8F8F8F"/><rect x="4" y="6.4" width="14" height="4.7" fill="#8F8F8F"/><rect x="18.2" y="7" width="2" height="3" fill="#F8F8F8"/><rect x="6.1" y="13" width="9.8" height="7.8" fill="#8F8F8F"/><path d="M7.3 15.4h3.5M7.3 17.4h7.4M7.3 19.3h7.4" stroke="#F8F8F8" stroke-width="0.9"/></svg>
<svg class="a" style="left:803px;top:109px" width="10" height="10" viewBox="0 0 10 10"><g transform="translate(5 5)"><circle r="3" fill="#3F5068"/><rect x="-0.9" y="-4.4" width="1.8" height="2" fill="#3F5068" transform="rotate(0)"/><rect x="-0.9" y="-4.4" width="1.8" height="2" fill="#3F5068" transform="rotate(45)"/><rect x="-0.9" y="-4.4" width="1.8" height="2" fill="#3F5068" transform="rotate(90)"/><rect x="-0.9" y="-4.4" width="1.8" height="2" fill="#3F5068" transform="rotate(135)"/><rect x="-0.9" y="-4.4" width="1.8" height="2" fill="#3F5068" transform="rotate(180)"/><rect x="-0.9" y="-4.4" width="1.8" height="2" fill="#3F5068" transform="rotate(225)"/><rect x="-0.9" y="-4.4" width="1.8" height="2" fill="#3F5068" transform="rotate(270)"/><rect x="-0.9" y="-4.4" width="1.8" height="2" fill="#3F5068" transform="rotate(315)"/><circle r="1.2" fill="#F8F8F8"/></g></svg>
<svg class="a" style="left:814.2px;top:111.8px" width="13.2" height="12.6" viewBox="0 0 22 21"><rect x="6.1" y="0" width="9.8" height="3.8" fill="#3F5068"/><path d="M0 5.5a2.5 2.5 0 0 1 2.5-2.5h1.7v14.8H2.5A2.5 2.5 0 0 1 0 15.3z" fill="#3F5068"/><path d="M22 5.5a2.5 2.5 0 0 0-2.5-2.5h-1.7v14.8h1.7a2.5 2.5 0 0 0 2.5-2.5z" fill="#3F5068"/><rect x="4" y="6.4" width="14" height="4.7" fill="#3F5068"/><rect x="18.2" y="7" width="2" height="3" fill="#F8F8F8"/><rect x="6.1" y="13" width="9.8" height="7.8" fill="#3F5068"/><path d="M7.3 15.4h3.5M7.3 17.4h7.4M7.3 19.3h7.4" stroke="#F8F8F8" stroke-width="0.9"/></svg>
<svg class="a" style="left:854px;top:104px" width="24" height="24" viewBox="-12 -12 24 24"><circle cx="0" cy="0" r="12" fill="#1EB48F"/><g transform="scale(1.0)"><path d="M-5.5 -6v12" stroke="#fff" stroke-width="2.4"/><path d="M6 -7v14L-3.5 0z" fill="#fff"/></g></svg>
<svg class="a" style="left:902px;top:104px" width="24" height="24" viewBox="-12 -12 24 24"><circle cx="0" cy="0" r="12" fill="#1EB48F"/><g transform="scale(1.0)"><path d="M4.5 -7v14L-6 0z" fill="#fff"/></g></svg>
<svg class="a" style="left:949px;top:104px" width="24" height="24" viewBox="-12 -12 24 24"><circle cx="0" cy="0" r="12" fill="#1EB48F"/><g transform="scale(1.0)"><path d="M-4 -7v14L6.5 0z" fill="#fff"/></g></svg>
<svg class="a" style="left:987px;top:104px" width="24" height="24" viewBox="-12 -12 24 24"><circle cx="0" cy="0" r="12" fill="#1EB48F"/><g transform="scale(1.0)"><path d="M6 -6v12" stroke="#fff" stroke-width="2.4"/><path d="M-5.5 -7v14L4 0z" fill="#fff"/></g></svg>
<svg class="a" style="left:1030px;top:104px" width="24" height="24" viewBox="0 0 24 24"><circle cx="14.6" cy="11" r="6.5" fill="none" stroke="#3F5068" stroke-width="3.2"/><path d="M9.5 16.2L3.3 22.2" stroke="#3F5068" stroke-width="4.2" stroke-linecap="round"/></svg>
<svg class="a" style="left:1085px;top:104px" width="23" height="24" viewBox="0 0 23 24"><rect x="1.5" y="2" width="16" height="20" rx="2.2" fill="#EDEDED" stroke="#5E5E5E" stroke-width="1.3"/><path d="M3.5 4h3.5v4.5H3.5z" fill="#A8A8A8"/><path d="M3.5 11h11M3.5 14h9M3.5 17h8" stroke="#ABABAB" stroke-width="1.4"/><circle cx="15.2" cy="17" r="4.6" fill="#fff" stroke="#7B3FA0" stroke-width="1.7"/><path d="M14.5 14.3v2.9h2.4" fill="none" stroke="#7B3FA0" stroke-width="1.2"/></svg>
<div class="a" style="left:1125px;top:99px;width:112px;height:20px;background:#EEF4FC;border:1px solid #B4C6DE;box-sizing:border-box"></div>
<svg class="a" style="left:1226px;top:107px" width="7" height="4" viewBox="0 0 7 4"><path d="M0 0h7L3.5 4z" fill="#555"/></svg>
<div class="a" style="left:1125px;top:123px;width:112px;height:20px;background:#EEF4FC;border:1px solid #B4C6DE;box-sizing:border-box"></div>
<svg class="a" style="left:1226px;top:131px" width="7" height="4" viewBox="0 0 7 4"><path d="M0 0h7L3.5 4z" fill="#555"/></svg>
<div class="a t" style="left:1129.00px;top:103.34px;font-size:12px;color:#111;transform:scaleX(0.9924);transform-origin:0 0;">No Filter</div>
<div class="a t" style="left:1129.00px;top:127.34px;font-size:12px;color:#111;transform:scaleX(0.9370);transform-origin:0 0;">Name</div>
<svg class="a" style="left:1259px;top:102px" width="24" height="28" viewBox="0 0 24 28"><path d="M1 6.5a1 1 0 0 1 1-1h19a1 1 0 0 1 1 1V26H1z" fill="#3B8FD6"/><path d="M6 4.5h11v4H6z" fill="#3B8FD6" stroke="#F8F8F8" stroke-width="1"/><circle cx="11.5" cy="3.3" r="1.6" fill="#3B8FD6" stroke="#F8F8F8" stroke-width="0.8"/><path d="M8.5 10.8h6.5l4 4V25.5H8.5z" fill="#FFFFFF"/><path d="M15 10.8v4h4" fill="#3B8FD6"/><path d="M10.3 14.5h3M10.3 16.5h6.6M10.3 18.5h6.6M10.3 20.5h5M10.3 22.8h6.6" stroke="#3B8FD6" stroke-width="0.9"/></svg>
<svg class="a" style="left:1293px;top:101px" width="18" height="17" viewBox="0 0 18 17"><ellipse cx="4" cy="12.2" rx="2.6" ry="2" transform="rotate(-35 4 12.2)" fill="none" stroke="#3B8FD6" stroke-width="1.5"/><ellipse cx="14" cy="12.2" rx="2.6" ry="2" transform="rotate(35 14 12.2)" fill="none" stroke="#3B8FD6" stroke-width="1.5"/><path d="M5.8 10.5L15 1.5M12.2 10.5L3 1.5" stroke="#3B8FD6" stroke-width="1.5"/></svg>
<svg class="a" style="left:1295px;top:125px" width="15" height="16" viewBox="0 0 15 16"><path d="M4.5 0.5h10v11h-10z" fill="#3B8FD6"/><path d="M0.5 3.5h10v12h-10z" fill="#3B8FD6" stroke="#F8F8F8" stroke-width="1"/><path d="M2.3 7h4.5M2.3 9.2h6.5M2.3 11.4h6.5M2.3 13.6h6.5" stroke="#F8F8F8" stroke-width="0.9"/></svg>
<svg class="a" style="left:1347px;top:101px" width="17" height="15" viewBox="0 0 17 15"><path d="M1.5 6v7.5h11.5V11" fill="none" stroke="#3F5068" stroke-width="1.6"/><path d="M4 11c0-4 3-6 7-6V2l5 4.5-5 4.5V8c-3 0-5 1-7 3z" fill="#3F5068"/></svg>
<svg class="a" style="left:1401px;top:105px" width="23" height="23" viewBox="0 0 23 23"><circle cx="11.5" cy="11.5" r="10" fill="none" stroke="#8B3FAF" stroke-width="2.2"/><path d="M8 8.5a3.5 3.5 0 1 1 4.8 3.2c-.8.4-1.3 1-1.3 2v1" fill="none" stroke="#8B3FAF" stroke-width="2.1"/><circle cx="11.5" cy="17.5" r="1.3" fill="#8B3FAF"/></svg>
<svg class="a" style="left:1443px;top:105px" width="23" height="23" viewBox="0 0 23 23"><circle cx="11.5" cy="11.5" r="10" fill="none" stroke="#1E2E3C" stroke-width="2.2"/><path d="M8 6h6.5v7.5c0 2.5-1.3 3.5-3.2 3.5c-1.5 0-2.6-.7-3-1.8" fill="none" stroke="#1E2E3C" stroke-width="2.1"/></svg>
<div class="a" style="left:520px;top:190px;width:963px;height:405px;background:#EEF1F8"></div>
<div class="a" style="left:1465px;top:191px;width:18px;height:26px;background:#C3D9F5"></div>
<div class="a" style="left:521px;top:191px;width:945px;height:26px;background:linear-gradient(#F4F7FB,#E9EEF6 60%,#D9E1EC);border:1px solid #C5D2E3;border-left:none;border-radius:0 4px 4px 0;box-sizing:border-box"></div>
<div class="a" style="left:523px;top:196px;width:2px;height:2px;background:#7F93AE"></div>
<div class="a" style="left:523px;top:200px;width:2px;height:2px;background:#7F93AE"></div>
<div class="a" style="left:523px;top:204px;width:2px;height:2px;background:#7F93AE"></div>
<div class="a" style="left:523px;top:208px;width:2px;height:2px;background:#7F93AE"></div>
<svg class="a" style="left:533px;top:196px" width="14" height="16" viewBox="0 0 14 16"><path d="M1 1h8l4 4v10H1z" fill="#fff" stroke="#3F5068" stroke-width="1.5"/><path d="M8.5 1v4.5H13" fill="none" stroke="#3F5068" stroke-width="1.3"/></svg>
<svg class="a" style="left:553px;top:196px" width="17" height="16" viewBox="0 0 26 24"><path d="M19.9 15.6A8.2 8.2 0 1 1 18.3 6" fill="none" stroke="#3F5068" stroke-width="4.2" stroke-linecap="round"/><path d="M23.9 3.3V12.2H15Z" fill="#3F5068"/></svg>
<svg class="a" style="left:578px;top:196px" width="15" height="15" viewBox="0 0 15 15"><path d="M1 1h13v13H1z" fill="none" stroke="#A0A0A0" stroke-width="1.6"/><path d="M3.5 1.5h8v4.5h-8z" fill="none" stroke="#A0A0A0" stroke-width="1.3"/></svg>
<svg class="a" style="left:600px;top:196px" width="13" height="16" viewBox="0 0 13 16"><path d="M1 3h11M4.5 3V1.2h4V3" fill="none" stroke="#3F5068" stroke-width="1.4"/><path d="M2.2 4.5h8.6l-.6 10.5H2.8z" fill="none" stroke="#3F5068" stroke-width="1.5"/><path d="M5 6v7.5M8 6v7.5" stroke="#3F5068" stroke-width="1.2"/></svg>
<svg class="a" style="left:621px;top:196px" width="16" height="16" viewBox="0 0 16 16"><circle cx="8" cy="8" r="7.8" fill="#A8A8A8"/><path d="M5.2 5.2L10.8 10.8M10.8 5.2L5.2 10.8" stroke="#fff" stroke-width="1.8"/></svg>
<svg class="a" style="left:643px;top:196px" width="16" height="16" viewBox="0 0 16 16"><path d="M1.5 5h4l2 2v8h-6z" fill="none" stroke="#3F5068" stroke-width="1.3"/><path d="M6 4.5V1.5h5l3.5 3.5v7H8" fill="none" stroke="#3F5068" stroke-width="1.3"/></svg>
<div class="a" style="left:665px;top:196px;width:1px;height:16px;background:#A6B4C8"></div>
<div class="a t" style="left:676.50px;top:198.14px;font-size:12px;color:#8A8A8A;transform:scaleX(0.9728);transform-origin:0 0;">Print</div>
<svg class="a" style="left:703px;top:202px" width="5" height="3" viewBox="0 0 5 3"><path d="M0 0h5L2.5 3z" fill="#A0A0A0"/></svg>
<svg class="a" style="left:716px;top:195px" width="8" height="8" viewBox="0 0 8 8"><circle cx="4" cy="4" r="2.4" fill="none" stroke="#3F5068" stroke-width="1.7"/></svg>
<svg class="a" style="left:722.2px;top:200.8px" width="10.8" height="10.3" viewBox="0 0 22 21"><rect x="6.1" y="0" width="9.8" height="3.8" fill="#3F5068"/><path d="M0 5.5a2.5 2.5 0 0 1 2.5-2.5h1.7v14.8H2.5A2.5 2.5 0 0 1 0 15.3z" fill="#3F5068"/><path d="M22 5.5a2.5 2.5 0 0 0-2.5-2.5h-1.7v14.8h1.7a2.5 2.5 0 0 0 2.5-2.5z" fill="#3F5068"/><rect x="4" y="6.4" width="14" height="4.7" fill="#3F5068"/><rect x="18.2" y="7" width="2" height="3" fill="#E8EDF5"/><rect x="6.1" y="13" width="9.8" height="7.8" fill="#3F5068"/><path d="M7.3 15.4h3.5M7.3 17.4h7.4M7.3 19.3h7.4" stroke="#E8EDF5" stroke-width="0.9"/></svg>
<div class="a" style="left:738px;top:196px;width:1px;height:16px;background:#A6B4C8"></div>
<svg class="a" style="left:745px;top:196px" width="16" height="16" viewBox="-8 -8 16 16"><circle cx="0" cy="0" r="8" fill="#1EB48F"/><g transform="scale(0.6666666666666666)"><path d="M-5.5 -6v12" stroke="#fff" stroke-width="2.4"/><path d="M6 -7v14L-3.5 0z" fill="#fff"/></g></svg>
<svg class="a" style="left:767px;top:196px" width="16" height="16" viewBox="-8 -8 16 16"><circle cx="0" cy="0" r="8" fill="#1EB48F"/><g transform="scale(0.6666666666666666)"><path d="M4.5 -7v14L-6 0z" fill="#fff"/></g></svg>
<svg class="a" style="left:789px;top:196px" width="16" height="16" viewBox="-8 -8 16 16"><circle cx="0" cy="0" r="8" fill="#1EB48F"/><g transform="scale(0.6666666666666666)"><path d="M-4 -7v14L6.5 0z" fill="#fff"/></g></svg>
<svg class="a" style="left:811px;top:196px" width="16" height="16" viewBox="-8 -8 16 16"><circle cx="0" cy="0" r="8" fill="#1EB48F"/><g transform="scale(0.6666666666666666)"><path d="M6 -6v12" stroke="#fff" stroke-width="2.4"/><path d="M-5.5 -7v14L4 0z" fill="#fff"/></g></svg>
<svg class="a" style="left:832px;top:194px" width="18" height="18" viewBox="0 0 18 18"><circle cx="11" cy="7" r="5" fill="none" stroke="#3F5068" stroke-width="2"/><path d="M7.5 10.5L2 16" stroke="#3F5068" stroke-width="2.6" stroke-linecap="round"/></svg>
<div class="a" style="left:854px;top:196px;width:1px;height:16px;background:#A6B4C8"></div>
<div class="a" style="left:858px;top:193px;width:112px;height:22px;background:#EEF4FC;border:1px solid #B4C6DE;box-sizing:border-box"></div>
<div class="a" style="left:969px;top:193px;width:113px;height:22px;background:#EEF4FC;border:1px solid #B4C6DE;box-sizing:border-box"></div>
<div class="a t" style="left:862.00px;top:198.34px;font-size:12px;color:#111;transform:scaleX(0.9924);transform-origin:0 0;">No Filter</div>
<div class="a t" style="left:974.00px;top:198.34px;font-size:12px;color:#111;transform:scaleX(0.9370);transform-origin:0 0;">Name</div>
<svg class="a" style="left:960px;top:203px" width="6" height="3" viewBox="0 0 6 3"><path d="M0 0h6L3 3z" fill="#555"/></svg>
<svg class="a" style="left:1072px;top:203px" width="6" height="3" viewBox="0 0 6 3"><path d="M0 0h6L3 3z" fill="#555"/></svg>
<div class="a t" style="left:1091.00px;top:198.34px;font-size:12px;color:#3F4F6E;transform:scaleX(0.9480);transform-origin:0 0;">Recent Items</div>
<svg class="a" style="left:1162px;top:202px" width="6" height="3" viewBox="0 0 6 3"><path d="M0 0h6L3 3z" fill="#3F4F6E"/></svg>
<div class="a" style="left:1175px;top:196px;width:1px;height:16px;background:#A6B4C8"></div>
<svg class="a" style="left:1182px;top:196px" width="16" height="18" viewBox="0 0 16 18"><path d="M1 3h14v14H1z" fill="#3F5068"/><path d="M5 1h6v4H5z" fill="#fff" stroke="#3F5068" stroke-width="1.4"/><path d="M7 7h5l2.5 2.5V16H7z" fill="#fff"/><path d="M8.5 11h4.5M8.5 13.5h4.5" stroke="#3F5068" stroke-width="1"/></svg>
<svg class="a" style="left:1203px;top:197px" width="18" height="16" viewBox="0 0 18 16"><circle cx="4" cy="12" r="2.8" fill="none" stroke="#3B8FD6" stroke-width="1.6"/><circle cx="14" cy="12" r="2.8" fill="none" stroke="#3B8FD6" stroke-width="1.6"/><path d="M5.8 9.8L14.5 1M12.2 9.8L3.5 1" stroke="#3B8FD6" stroke-width="1.6"/></svg>
<svg class="a" style="left:1227px;top:196px" width="15" height="16" viewBox="0 0 15 16"><path d="M4 1h10v11H4z" fill="#3B8FD6"/><path d="M1 4h10v11H1z" fill="#3B8FD6" stroke="#EEF2F8" stroke-width="1"/><path d="M3 7.5h6M3 10h6M3 12.5h6" stroke="#EEF2F8" stroke-width="1"/></svg>
<div class="a" style="left:1248px;top:196px;width:1px;height:16px;background:#A6B4C8"></div>
<svg class="a" style="left:1253px;top:196px" width="17" height="15" viewBox="0 0 17 15"><path d="M1.5 6v7.5h11.5V11" fill="none" stroke="#3F5068" stroke-width="1.6"/><path d="M4 11c0-4 3-6 7-6V2l5 4.5-5 4.5V8c-3 0-5 1-7 3z" fill="#3F5068"/></svg>
<div class="a" style="left:1275px;top:196px;width:1px;height:16px;background:#A6B4C8"></div>
<svg class="a" style="left:1281px;top:195px" width="18" height="18" viewBox="0 0 18 18"><circle cx="9" cy="9" r="7.8" fill="none" stroke="#8B3FAF" stroke-width="1.7"/><path d="M6.3 6.8a2.7 2.7 0 1 1 3.7 2.5c-.6.3-1 .8-1 1.5v.8" fill="none" stroke="#8B3FAF" stroke-width="1.7"/><circle cx="9" cy="13.6" r="1.1" fill="#8B3FAF"/></svg>
<div class="a" style="left:1304px;top:196px;width:1px;height:16px;background:#A6B4C8"></div>
<svg class="a" style="left:1310px;top:196px" width="16" height="18" viewBox="0 0 16 18"><path d="M1 9c1-3.5 4-5 8-5V1.5l5 4-5 4V7C6 7 3 7.5 1 9z" fill="#3F5068"/><text x="1.5" y="17" font-size="6.5" font-weight="bold" fill="#3F5068">xml</text></svg>
<svg class="a" style="left:1332px;top:196px" width="16" height="18" viewBox="0 0 16 18"><path d="M14 1.5c-3.5 0-6.5 1.5-8 4.5L3.5 4 2 10.5 8.5 9.5 6.5 7.8c1.5-2.5 4-3.8 7.5-4z" fill="#3F5068"/><text x="1.5" y="17" font-size="6.5" font-weight="bold" fill="#3F5068">xml</text></svg>
<div class="a" style="left:1354px;top:196px;width:1px;height:16px;background:#A6B4C8"></div>
<svg class="a" style="left:1356.7px;top:193.8px" width="20.96" height="20.96" viewBox="0 0 32 32"><ellipse cx="13" cy="14" rx="3.8" ry="4.4" fill="#3F5068"/><rect x="10.6" y="16" width="4.8" height="5.5" fill="#3F5068"/><path d="M5 24.3L10.6 21H15.4L21.8 24.3V27.8H5z" fill="#3F5068"/><path d="M21 10.6V6.3a0.8 0.8 0 0 1 .8-.8h4.2a0.8 0.8 0 0 1 .8.8v4.3" fill="none" stroke="#3F5068" stroke-width="1.3"/><rect x="19.1" y="10.2" width="8.8" height="5.6" fill="#3F5068"/></svg>
<div class="a" style="left:1381px;top:196px;width:1px;height:16px;background:#A6B4C8"></div>
<svg class="a" style="left:1388px;top:195px" width="15.8" height="18.9" viewBox="0 0 15 18"><path d="M1.6 1.6H8L13.2 6.6V16.6H1.6Z" fill="none" stroke="#3F5068" stroke-width="1.1"/><path d="M7.3 1.2H8.4L13.6 6.2V7H7.3Z" fill="#3F5068"/><ellipse cx="5.8" cy="12.3" rx="2.3" ry="1.5" transform="rotate(-35 5.8 12.3)" fill="none" stroke="#3F5068" stroke-width="0.9"/><ellipse cx="9" cy="10.4" rx="2.3" ry="1.5" transform="rotate(-35 9 10.4)" fill="none" stroke="#3F5068" stroke-width="0.9"/></svg>
<div class="a t" style="left:1413.00px;top:198.34px;font-size:12px;color:#3F4F6E;transform:scaleX(1.0528);transform-origin:0 0;">About</div>
<div class="a" style="left:1455px;top:200px;width:10px;height:17px;background:linear-gradient(#F4F7FB,#D9E1EC);border-radius:0 4px 4px 0"></div>
<svg class="a" style="left:1456px;top:207px" width="8" height="7" viewBox="0 0 8 7"><path d="M1 0.5h6" stroke="#2B3340" stroke-width="1"/><path d="M0.5 3h7L4 7z" fill="#2B3340"/></svg>
<div class="a" style="left:527px;top:233px;width:956px;height:152px;border:1px solid #9DB0C9;border-right:none;box-sizing:border-box"></div>
<div class="a" style="left:530px;top:224px;width:118px;height:17px;background:#EEF1F8"></div>
<div class="a" style="left:534px;top:224px;width:17px;height:17px;background:linear-gradient(#FFFFFF,#ECECEC);border:1px solid #A7AFBA;border-radius:3px;box-sizing:border-box"></div>
<div class="a" style="left:538px;top:232px;width:9px;height:1px;background:#000"></div>
<div class="a t" style="left:554.50px;top:226.69px;font-size:11px;color:#000;transform:scaleX(0.9919);transform-origin:0 0;">Group Information</div>
<div class="a t" style="left:533.30px;top:246.69px;font-size:11px;color:#000;transform:scaleX(1.0060);transform-origin:0 0;">Group Name</div>
<div class="a" style="left:659px;top:242px;width:824px;height:21px;background:#fff;border:1px solid #A9BBD4;border-right:none;box-sizing:border-box"></div>
<div class="a t" style="left:664.00px;top:247.69px;font-size:11px;color:#000;">Accounts Payable</div>
<div class="a t" style="left:533.30px;top:273.69px;font-size:11px;color:#000;transform:scaleX(1.0060);transform-origin:0 0;">Description</div>
<div class="a" style="left:659px;top:269px;width:824px;height:21px;background:#fff;border:1px solid #A9BBD4;border-right:none;box-sizing:border-box"></div>
<div class="a t" style="left:664.00px;top:274.69px;font-size:11px;color:#000;">Accounts Payable</div>
<div class="a t" style="left:533.30px;top:300.69px;font-size:11px;color:#000;transform:scaleX(1.0060);transform-origin:0 0;">Currently Selected Item</div>
<div class="a" style="left:659px;top:296px;width:824px;height:21px;background:#fff;border:1px solid #A9BBD4;border-right:none;box-sizing:border-box"></div>
<div class="a" style="left:663px;top:297px;width:166px;height:19px;background:#FFFF00;border-radius:1px 4px 4px 1px"></div>
<div class="a t" style="left:664.00px;top:301.69px;font-size:11px;color:#000;transform:scaleX(1.0268);transform-origin:0 0;">ShippingAddressJiwaGrid.Field</div>
<div class="a" style="left:660px;top:332px;width:154px;height:47px;border:1px solid #8FA3BF;box-sizing:border-box"></div>
<div class="a" style="left:665px;top:325px;width:32px;height:9px;background:#EEF1F8"></div>
<div class="a t" style="left:668.00px;top:326.19px;font-size:11px;color:#000;">Read</div>
<div class="a" style="left:822px;top:332px;width:154px;height:47px;border:1px solid #8FA3BF;box-sizing:border-box"></div>
<div class="a" style="left:826px;top:325px;width:34px;height:9px;background:#EEF1F8"></div>
<div class="a t" style="left:829.00px;top:326.19px;font-size:11px;color:#000;">Write</div>
<div class="a" style="left:993px;top:332px;width:296px;height:47px;border:1px solid #8FA3BF;box-sizing:border-box"></div>
<div class="a" style="left:997px;top:325px;width:45px;height:9px;background:#EEF1F8"></div>
<div class="a t" style="left:1000.00px;top:326.19px;font-size:11px;color:#000;">Opacity</div>
<div class="a" style="left:672px;top:342px;width:61px;height:32px;background:#F0F0F0;border:1px solid #FFFFFF;border-right-color:#696969;border-bottom-color:#696969;box-sizing:border-box;box-shadow:inset -1px -1px 0 #A0A0A0, -1px -1px 0 #E3E3E3"></div>
<div class="a t" style="left:689.36px;top:352.69px;font-size:11px;color:#000;">Allow</div>
<div class="a" style="left:739px;top:342px;width:61px;height:32px;background:#F0F0F0;border:1px solid #FFFFFF;border-right-color:#696969;border-bottom-color:#696969;box-sizing:border-box;box-shadow:inset -1px -1px 0 #A0A0A0, -1px -1px 0 #E3E3E3"></div>
<div class="a t" style="left:749.03px;top:352.69px;font-size:11px;color:#000;">Disallow</div>
<div class="a" style="left:834px;top:342px;width:61px;height:32px;background:#F0F0F0;border:1px solid #FFFFFF;border-right-color:#696969;border-bottom-color:#696969;box-sizing:border-box;box-shadow:inset -1px -1px 0 #A0A0A0, -1px -1px 0 #E3E3E3"></div>
<div class="a t" style="left:851.36px;top:352.69px;font-size:11px;color:#000;">Allow</div>
<div class="a" style="left:901px;top:342px;width:61px;height:32px;background:#F0F0F0;border:1px solid #FFFFFF;border-right-color:#696969;border-bottom-color:#696969;box-sizing:border-box;box-shadow:inset -1px -1px 0 #A0A0A0, -1px -1px 0 #E3E3E3"></div>
<div class="a t" style="left:911.03px;top:352.69px;font-size:11px;color:#000;">Disallow</div>
<div class="a" style="left:1006px;top:353px;width:268px;height:4px;background:#8A9CB6"></div>
<svg class="a" style="left:1263px;top:347px" width="11" height="15" viewBox="0 0 11 15"><defs><linearGradient id="tg" x1="0" y1="0" x2="0" y2="1"><stop offset="0" stop-color="#FFFFFF"/><stop offset="1" stop-color="#D9E1EC"/></linearGradient></defs><path d="M1.6 1.6h7.8v8.3l-3.9 3.9-3.9-3.9z" fill="url(#tg)" stroke="#6B7C95" stroke-width="1.3"/></svg>
<svg class="a" style="left:1011px;top:368px" width="262" height="3" viewBox="0 0 262 3"><rect x="0" y="0" width="1" height="3" fill="#7F92B0"/><rect x="5" y="0" width="1" height="3" fill="#7F92B0"/><rect x="10" y="0" width="1" height="3" fill="#7F92B0"/><rect x="15" y="0" width="1" height="3" fill="#7F92B0"/><rect x="21" y="0" width="1" height="3" fill="#7F92B0"/><rect x="26" y="0" width="1" height="3" fill="#7F92B0"/><rect x="31" y="0" width="1" height="3" fill="#7F92B0"/><rect x="36" y="0" width="1" height="3" fill="#7F92B0"/><rect x="41" y="0" width="1" height="3" fill="#7F92B0"/><rect x="46" y="0" width="1" height="3" fill="#7F92B0"/><rect x="51" y="0" width="1" height="3" fill="#7F92B0"/><rect x="57" y="0" width="1" height="3" fill="#7F92B0"/><rect x="62" y="0" width="1" height="3" fill="#7F92B0"/><rect x="67" y="0" width="1" height="3" fill="#7F92B0"/><rect x="72" y="0" width="1" height="3" fill="#7F92B0"/><rect x="77" y="0" width="1" height="3" fill="#7F92B0"/><rect x="82" y="0" width="1" height="3" fill="#7F92B0"/><rect x="87" y="0" width="1" height="3" fill="#7F92B0"/><rect x="93" y="0" width="1" height="3" fill="#7F92B0"/><rect x="98" y="0" width="1" height="3" fill="#7F92B0"/><rect x="103" y="0" width="1" height="3" fill="#7F92B0"/><rect x="108" y="0" width="1" height="3" fill="#7F92B0"/><rect x="113" y="0" width="1" height="3" fill="#7F92B0"/><rect x="118" y="0" width="1" height="3" fill="#7F92B0"/><rect x="123" y="0" width="1" height="3" fill="#7F92B0"/><rect x="129" y="0" width="1" height="3" fill="#7F92B0"/><rect x="134" y="0" width="1" height="3" fill="#7F92B0"/><rect x="139" y="0" width="1" height="3" fill="#7F92B0"/><rect x="144" y="0" width="1" height="3" fill="#7F92B0"/><rect x="149" y="0" width="1" height="3" fill="#7F92B0"/><rect x="154" y="0" width="1" height="3" fill="#7F92B0"/><rect x="159" y="0" width="1" height="3" fill="#7F92B0"/><rect x="165" y="0" width="1" height="3" fill="#7F92B0"/><rect x="170" y="0" width="1" height="3" fill="#7F92B0"/><rect x="175" y="0" width="1" height="3" fill="#7F92B0"/><rect x="180" y="0" width="1" height="3" fill="#7F92B0"/><rect x="185" y="0" width="1" height="3" fill="#7F92B0"/><rect x="190" y="0" width="1" height="3" fill="#7F92B0"/><rect x="195" y="0" width="1" height="3" fill="#7F92B0"/><rect x="201" y="0" width="1" height="3" fill="#7F92B0"/><rect x="206" y="0" width="1" height="3" fill="#7F92B0"/><rect x="211" y="0" width="1" height="3" fill="#7F92B0"/><rect x="216" y="0" width="1" height="3" fill="#7F92B0"/><rect x="221" y="0" width="1" height="3" fill="#7F92B0"/><rect x="226" y="0" width="1" height="3" fill="#7F92B0"/><rect x="231" y="0" width="1" height="3" fill="#7F92B0"/><rect x="237" y="0" width="1" height="3" fill="#7F92B0"/><rect x="242" y="0" width="1" height="3" fill="#7F92B0"/><rect x="247" y="0" width="1" height="3" fill="#7F92B0"/><rect x="252" y="0" width="1" height="3" fill="#7F92B0"/><rect x="257" y="0" width="1" height="3" fill="#7F92B0"/></svg>
<div class="a" style="left:618px;top:389px;width:865px;height:25px;background:#3F5068"></div>
<div class="a" style="left:529px;top:389px;width:89px;height:25px;background:#F3F6FB"></div>
<div class="a" style="left:528px;top:389px;width:2px;height:2px;background:#333"></div>
<div class="a t" style="left:536.00px;top:392.15px;font-size:14px;color:#3F4F6E;transform:scaleX(0.9906);transform-origin:0 0;">Permissions</div>
<div class="a t" style="left:622.20px;top:393.65px;font-size:14px;color:#FFFFFF;transform:scaleX(0.9966);transform-origin:0 0;">Abstract Permissions</div>
<div class="a" style="left:529px;top:414px;width:954px;height:37px;background:#EBF2FB"></div>
<div class="a t" style="left:536.20px;top:431.69px;font-size:11px;color:#000;transform:scaleX(1.0023);transform-origin:0 0;">Default Read Permission</div>
<div class="a t" style="left:805.00px;top:431.69px;font-size:11px;color:#000;transform:scaleX(1.0177);transform-origin:0 0;">Default Write Permission</div>
<div class="a" style="left:678px;top:426px;width:106px;height:21px;background:#EFF0F8;border:1px solid #B3BDD6;box-sizing:border-box"></div>
<div class="a t" style="left:682.00px;top:431.69px;font-size:11px;color:#000;transform:scaleX(1.0273);transform-origin:0 0;">Allow</div>
<svg class="a" style="left:774px;top:435px" width="7" height="4" viewBox="0 0 7 4"><path d="M0 0h7L3.5 4z" fill="#C09AB3"/></svg>
<div class="a" style="left:947px;top:426px;width:105px;height:21px;background:#EFF0F8;border:1px solid #B3BDD6;box-sizing:border-box"></div>
<div class="a t" style="left:951.00px;top:431.69px;font-size:11px;color:#000;transform:scaleX(1.0273);transform-origin:0 0;">Allow</div>
<svg class="a" style="left:1042px;top:435px" width="7" height="4" viewBox="0 0 7 4"><path d="M0 0h7L3.5 4z" fill="#C09AB3"/></svg>
<div class="a" style="left:534px;top:450px;width:949px;height:124px;background:#fff;border-top:2px solid #6E6E6E;border-left:2px solid #6E6E6E;box-sizing:border-box"></div>
<div class="a" style="left:536px;top:452px;width:465px;height:39px;background:linear-gradient(#FBFCFE,#E8EDF4 60%,#D4DDE9)"></div>
<div class="a" style="left:628px;top:452px;width:1px;height:120px;background:#CFCFCF"></div>
<div class="a" style="left:721.5px;top:452px;width:1.0px;height:120px;background:#CFCFCF"></div>
<div class="a" style="left:815px;top:452px;width:1px;height:120px;background:#CFCFCF"></div>
<div class="a" style="left:907.5px;top:452px;width:1.0px;height:120px;background:#CFCFCF"></div>
<div class="a" style="left:1001px;top:452px;width:1px;height:120px;background:#CFCFCF"></div>
<div class="a t" style="left:563.27px;top:467.19px;font-size:11px;color:#000;">ItemNo</div>
<div class="a t" style="left:641.91px;top:467.19px;font-size:11px;color:#000;">Control Type</div>
<div class="a t" style="left:732.06px;top:467.19px;font-size:11px;color:#000;">Control Name</div>
<div class="a t" style="left:827.38px;top:461.19px;font-size:11px;color:#000;">Read Access</div>
<div class="a t" style="left:846.34px;top:474.19px;font-size:11px;color:#000;">Level</div>
<div class="a t" style="left:920.81px;top:461.19px;font-size:11px;color:#000;">Write Access</div>
<div class="a t" style="left:939.34px;top:474.19px;font-size:11px;color:#000;">Level</div>
<div class="a" style="left:536px;top:491px;width:279px;height:81px;background:#EEF1F8"></div>
<div class="a" style="left:628px;top:491px;width:1px;height:81px;background:#D6D6D6"></div>
<div class="a" style="left:721.5px;top:491px;width:1.0px;height:81px;background:#D6D6D6"></div>
<div class="a" style="left:815px;top:491px;width:1px;height:81px;background:#D6D6D6"></div>
<div class="a" style="left:907.5px;top:491px;width:1.0px;height:81px;background:#D6D6D6"></div>
<div class="a" style="left:1001px;top:491px;width:1px;height:81px;background:#D6D6D6"></div>
<div class="a" style="left:536px;top:511px;width:465px;height:1px;background:#D6D6D6"></div>
<div class="a t" style="left:615.88px;top:494.19px;font-size:11px;color:#000;">1</div>
<div class="a t" style="left:631.00px;top:494.19px;font-size:11px;color:#000;">Control</div>
<div class="a t" style="left:724px;top:494.2px;width:90px;overflow:hidden;font-size:11px;line-height:1">UserInterface_Fill_Panel</div>
<div class="a t" style="left:817.00px;top:494.19px;font-size:11px;color:#000;">Undefined</div>
<div class="a t" style="left:910.00px;top:494.19px;font-size:11px;color:#000;">Undefined</div>
<div class="a" style="left:536px;top:531px;width:465px;height:1px;background:#D6D6D6"></div>
<div class="a t" style="left:615.88px;top:514.19px;font-size:11px;color:#000;">2</div>
<div class="a t" style="left:631.00px;top:514.19px;font-size:11px;color:#000;">Tab</div>
<div class="a t" style="left:724px;top:514.2px;width:90px;overflow:hidden;font-size:11px;line-height:1">MainUltraTabControl</div>
<div class="a t" style="left:817.00px;top:514.19px;font-size:11px;color:#000;">Undefined</div>
<div class="a t" style="left:910.00px;top:514.19px;font-size:11px;color:#000;">Undefined</div>
<div class="a" style="left:536px;top:551px;width:465px;height:1px;background:#D6D6D6"></div>
<div class="a t" style="left:615.88px;top:534.19px;font-size:11px;color:#000;">3</div>
<div class="a t" style="left:631.00px;top:534.19px;font-size:11px;color:#000;">Tab</div>
<div class="a t" style="left:724px;top:534.2px;width:90px;overflow:hidden;font-size:11px;line-height:1">MainUltraTabControl</div>
<div class="a t" style="left:817.00px;top:534.19px;font-size:11px;color:#000;">Undefined</div>
<div class="a t" style="left:910.00px;top:534.19px;font-size:11px;color:#000;">Undefined</div>
<div class="a" style="left:536px;top:571px;width:465px;height:1px;background:#D6D6D6"></div>
<div class="a t" style="left:615.88px;top:554.19px;font-size:11px;color:#000;">4</div>
<div class="a t" style="left:631.00px;top:554.19px;font-size:11px;color:#000;">Tab</div>
<div class="a t" style="left:724px;top:554.2px;width:90px;overflow:hidden;font-size:11px;line-height:1">MainUltraTabControl</div>
<div class="a t" style="left:817.00px;top:554.19px;font-size:11px;color:#000;">Undefined</div>
<div class="a t" style="left:910.00px;top:554.19px;font-size:11px;color:#000;">Undefined</div>
<div class="a" style="left:890px;top:492px;width:17px;height:19px;background:linear-gradient(#F4F4F4,#E0E0E0);border:1px solid #ACACAC;box-sizing:border-box"></div>
<svg class="a" style="left:894px;top:499px" width="9" height="6" viewBox="0 0 9 6"><path d="M1 1l3.5 3.5L8 1" fill="none" stroke="#333" stroke-width="1.6"/></svg>
<div class="a" style="left:983px;top:492px;width:17px;height:19px;background:linear-gradient(#F4F4F4,#E0E0E0);border:1px solid #ACACAC;box-sizing:border-box"></div>
<svg class="a" style="left:987px;top:499px" width="9" height="6" viewBox="0 0 9 6"><path d="M1 1l3.5 3.5L8 1" fill="none" stroke="#333" stroke-width="1.6"/></svg>
<div class="a" style="left:1469px;top:452px;width:14px;height:121px;background:#7598C0"></div>
<div class="a" style="left:1470px;top:452px;width:13px;height:6px;background:linear-gradient(90deg,#FFFFFF,#DCE6F4);border:1px solid #5C7295;border-right:none;box-sizing:border-box"></div>
<div class="a" style="left:1474px;top:454.5px;width:7px;height:1.0px;background:#5C7FB0"></div>
<div class="a" style="left:1470px;top:458px;width:13px;height:16px;background:linear-gradient(90deg,#FFFFFF,#C3CEDE);border:1px solid #4D6795;border-right:none;box-sizing:border-box"></div>
<svg class="a" style="left:1473px;top:463px" width="9" height="5" viewBox="0 0 9 5"><path d="M0 5L4.5 0L9 5z" fill="#4A5B78"/></svg>
<div class="a" style="left:1470px;top:475px;width:13px;height:8px;background:linear-gradient(90deg,#FFFFFF,#C3CEDE);border:1px solid #4D6795;border-right:none;box-sizing:border-box"></div>
<div class="a" style="left:520px;top:575px;width:947px;height:21px;background:#D8E4F2"></div>
<div class="a" style="left:521px;top:576px;width:945px;height:19px;background:#3F5068"></div>
<div class="a t" style="left:523.00px;top:580.69px;font-size:11px;color:#fff;font-weight:bold;transform:scaleX(1.0525);transform-origin:0 0;">Warehouse</div>
<svg class="a" style="left:1472px;top:585px" width="11" height="11" viewBox="0 0 11 11"><path d="M10.5 1L1 10.5M10.5 5L5 10.5M10.5 9L9 10.5" stroke="#555" stroke-width="1"/></svg>
</body></html>
